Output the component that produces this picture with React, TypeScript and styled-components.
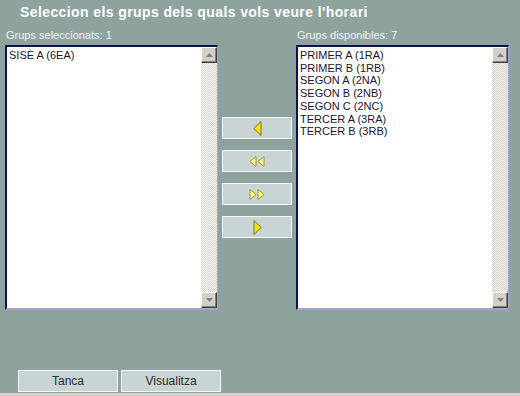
import React from "react";
import styled, { createGlobalStyle } from "styled-components";

const Global = createGlobalStyle`
  html, body { margin: 0; padding: 0; background: #8ea39e; }
  body { font-family: "Liberation Sans", Arial, sans-serif; }
`;

const Page = styled.div`
  width: 520px;
  height: 396px;
  background: #8ea39e;
  display: flex;
  flex-direction: column;
  overflow: hidden;
`;

const Title = styled.h1`
  margin: 0;
  padding: 4px 0 0 20px;
  height: 22px;
  font-family: "Liberation Sans", Arial, sans-serif;
  font-weight: bold;
  font-size: 14px;
  letter-spacing: 0.4px;
  line-height: 16px;
  color: #ffffff;
`;

const Main = styled.div`
  display: flex;
  gap: 4px;
  padding-left: 5px;
`;

const Column = styled.div`
  display: flex;
  flex-direction: column;
`;

const Label = styled.div`
  font-size: 11px;
  line-height: 13px;
  height: 19px;
  padding-left: 1px;
  padding-top: 3px;
  box-sizing: border-box;
  color: #eef2f0;
`;

const ListBox = styled.div`
  width: 213px;
  height: 265px;
  box-sizing: border-box;
  background: #ffffff;
  border-top: 2px solid #10104a;
  border-left: 2px solid #10104a;
  border-bottom: 2px solid #a4a4cc;
  border-right: 1px solid #a4a4cc;
  display: flex;
`;

const Items = styled.ul`
  list-style: none;
  margin: 0;
  padding: 2px 0 0 2px;
  flex: 1;
  font-size: 11px;
  line-height: 12.7px;
  color: #24142a;
`;

const Item = styled.li`
  margin: 0;
  white-space: nowrap;
`;

const ScrollBar = styled.div`
  width: 16px;
  display: flex;
  flex-direction: column;
  justify-content: space-between;
  background: repeating-conic-gradient(#d4d0c8 0 25%, #ffffff 0 50%) 0 0 / 2px 2px;
`;

const ScrollButton = styled.div`
  width: 16px;
  height: 16px;
  box-sizing: border-box;
  background: #d4d0c8;
  border-top: 1px solid #ffffff;
  border-left: 1px solid #ffffff;
  border-right: 1px solid #404040;
  border-bottom: 1px solid #404040;
  box-shadow: inset -1px -1px 0 #808080;
  display: flex;
  align-items: center;
  justify-content: center;
`;

const Middle = styled.div`
  width: 70px;
  padding-top: 91px;
  display: flex;
  flex-direction: column;
  gap: 11px;
`;

const PanelButton = styled.button<{ $width?: number }>`
  width: ${(p) => p.$width ?? 70}px;
  height: 22px;
  box-sizing: border-box;
  margin: 0;
  padding: 0;
  background: #c9d4d4;
  border: 1px solid #f4f8f8;
  font-family: "Liberation Sans", Arial, sans-serif;
  font-size: 12px;
  color: #2a2a2a;
  display: flex;
  align-items: center;
  justify-content: center;
  cursor: pointer;
`;

const Spacer = styled.div`
  flex: 1;
`;

const Footer = styled.div`
  display: flex;
  gap: 3px;
  padding-left: 18px;
  padding-bottom: 1px;
`;

const BottomEdge = styled.div`
  height: 3px;
  background: #d6d6d0;
`;

const ArrowUp = () => (
  <svg width="7" height="4" viewBox="0 0 7 4">
    <polygon points="0,4 3.5,0 7,4" fill="#808080" />
  </svg>
);
const ArrowDown = () => (
  <svg width="7" height="4" viewBox="0 0 7 4">
    <polygon points="0,0 3.5,4 7,0" fill="#808080" />
  </svg>
);

const SingleArrow = ({ dir }: { dir: "left" | "right" }) => (
  <svg width="9" height="15" viewBox="0 0 9 15">
    <polygon
      points={dir === "left" ? "8,0.5 0.8,7.5 8,14.5" : "1,0.5 8.2,7.5 1,14.5"}
      fill="#f4e400"
      stroke="#7c7420"
      strokeWidth="1"
    />
  </svg>
);

const DoubleArrow = ({ dir }: { dir: "left" | "right" }) => (
  <svg width="16" height="11" viewBox="0 0 16 11">
    {dir === "left" ? (
      <>
        <polygon points="7,0.5 1,5.5 7,10.5" fill="#fbf49a" stroke="#a89a10" strokeWidth="1" />
        <polygon points="15,0.5 9,5.5 15,10.5" fill="#fbf49a" stroke="#a89a10" strokeWidth="1" />
      </>
    ) : (
      <>
        <polygon points="1,0.5 7,5.5 1,10.5" fill="#fbf49a" stroke="#a89a10" strokeWidth="1" />
        <polygon points="9,0.5 15,5.5 9,10.5" fill="#fbf49a" stroke="#a89a10" strokeWidth="1" />
      </>
    )}
  </svg>
);

const List = ({ items }: { items: string[] }) => (
  <ListBox>
    <Items>
      {items.map((it) => (
        <Item key={it}>{it}</Item>
      ))}
    </Items>
    <ScrollBar>
      <ScrollButton>
        <ArrowUp />
      </ScrollButton>
      <ScrollButton>
        <ArrowDown />
      </ScrollButton>
    </ScrollBar>
  </ListBox>
);

export default function App() {
  const selected = ["SISÈ A (6EA)"];
  const available = [
    "PRIMER A (1RA)",
    "PRIMER B (1RB)",
    "SEGON A (2NA)",
    "SEGON B (2NB)",
    "SEGON C (2NC)",
    "TERCER A (3RA)",
    "TERCER B (3RB)",
  ];
  return (
    <>
      <Global />
      <Page>
        <Title>Seleccion els grups dels quals vols veure l'horari</Title>
        <Main>
          <Column>
            <Label>Grups seleccionats: {selected.length}</Label>
            <List items={selected} />
          </Column>
          <Middle>
            <PanelButton>
              <SingleArrow dir="left" />
            </PanelButton>
            <PanelButton>
              <DoubleArrow dir="left" />
            </PanelButton>
            <PanelButton>
              <DoubleArrow dir="right" />
            </PanelButton>
            <PanelButton>
              <SingleArrow dir="right" />
            </PanelButton>
          </Middle>
          <Column>
            <Label>Grups disponibles: {available.length}</Label>
            <List items={available} />
          </Column>
        </Main>
        <Spacer />
        <Footer>
          <PanelButton $width={100}>Tanca</PanelButton>
          <PanelButton $width={100}>Visualitza</PanelButton>
        </Footer>
        <BottomEdge />
      </Page>
    </>
  );
}
